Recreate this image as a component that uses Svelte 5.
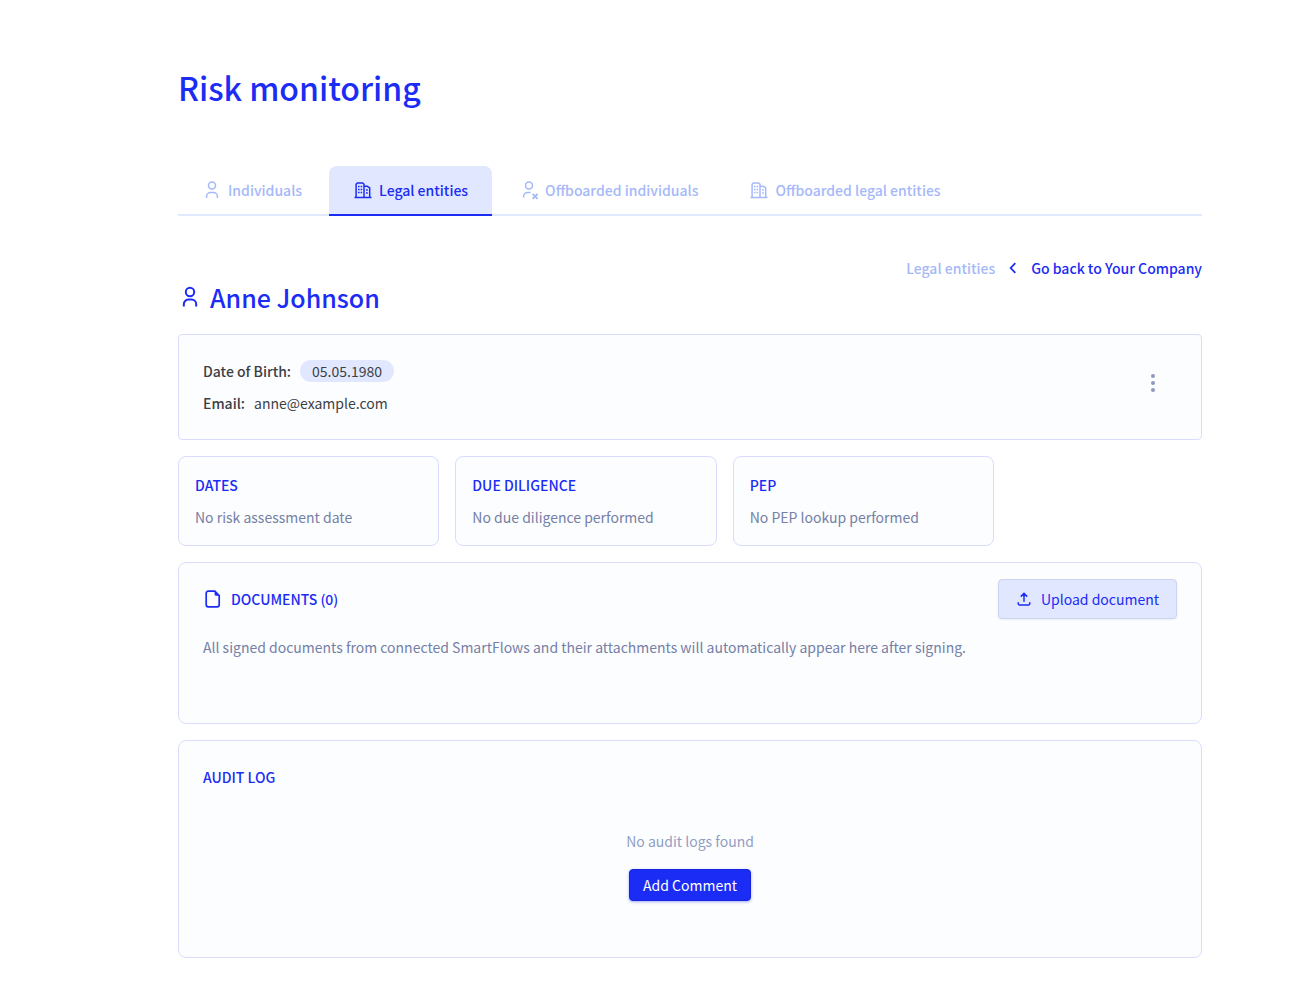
<script lang="ts">
	type Tab = { label: string; icon: 'person' | 'building' | 'person-x' };

	const tabs: Tab[] = [
		{ label: 'Individuals', icon: 'person' },
		{ label: 'Legal entities', icon: 'building' },
		{ label: 'Offboarded individuals', icon: 'person-x' },
		{ label: 'Offboarded legal entities', icon: 'building' }
	];
	let activeTab = $state('Legal entities');

	const checks = [
		{ title: 'DATES', text: 'No risk assessment date' },
		{ title: 'DUE DILIGENCE', text: 'No due diligence performed' },
		{ title: 'PEP', text: 'No PEP lookup performed' }
	];
</script>

{#snippet icon(name: string)}
	<svg class="icon" viewBox="0 0 20 20" aria-hidden="true">
		{#if name === 'person'}
			<circle cx="10" cy="5.6" r="3.5" />
			<path d="M4.6 18v-1.5a4 4 0 0 1 4-4h2.8a4 4 0 0 1 4 4v1.5" />
		{:else if name === 'person-x'}
			<circle cx="10" cy="5.6" r="3.5" />
			<path d="M4.6 17.6v-1.1a4 4 0 0 1 4-4h3" />
			<path class="cross" d="M13.6 13.8l5 5M18.6 13.8l-5 5" />
		{:else}
			<path d="M1.5 17.4h17M3.1 17.4V4.2l1.2-1.2h5.5L11 4.2v13.2M11 6.3h3.3l2.4 1.6v9.5" />
			<path d="M5 6.6h1.6M7.6 6.6h1.6M5 9.6h1.6M7.6 9.6h1.6M5 12.6h1.6M7.6 12.6h1.6M13 10.1h1.8M13 13.1h1.8" />
		{/if}
	</svg>
{/snippet}

<div class="page">
	<main>
		<h1>Risk monitoring</h1>

		<nav class="tabs">
			{#each tabs as tab}
				<button class="tab" class:active={tab.label === activeTab} onclick={() => (activeTab = tab.label)}>
					{@render icon(tab.icon)}
					{tab.label}
				</button>
			{/each}
		</nav>

		<div class="breadcrumb">
			<a class="muted" href="#entities">Legal entities</a>
			<svg class="chevron" viewBox="0 0 12 12" aria-hidden="true">
				<path d="M8.3 1.2L3.7 6l4.6 4.8" />
			</svg>
			<a href="#company">Go back to Your Company</a>
		</div>

		<h2 class="name">
			<svg class="icon large" viewBox="0 0 24 24" aria-hidden="true">
				<circle cx="12" cy="7" r="4.2" />
				<path d="M5.8 21.5v-2.3a4.6 4.6 0 0 1 4.6-4.6h3.2a4.6 4.6 0 0 1 4.6 4.6v2.3" />
			</svg>
			Anne Johnson
		</h2>

		<section class="card person">
			<dl>
				<div>
					<dt>Date of Birth:</dt>
					<dd class="pill">05.05.1980</dd>
				</div>
				<div>
					<dt>Email:</dt>
					<dd>anne@example.com</dd>
				</div>
			</dl>
			<button class="more" aria-label="More actions">
				<svg viewBox="0 0 24 24" aria-hidden="true">
					<circle cx="12" cy="5" r="2" />
					<circle cx="12" cy="12" r="2" />
					<circle cx="12" cy="19" r="2" />
				</svg>
			</button>
		</section>

		<div class="checks">
			{#each checks as check}
				<section class="card check">
					<h3>{check.title}</h3>
					<p>{check.text}</p>
				</section>
			{/each}
		</div>

		<section class="card documents">
			<header>
				<h3>
					<svg class="icon" viewBox="0 0 20 20" aria-hidden="true">
						<path d="M5.2 2.2h6.6l4.4 4.4v9.2a2 2 0 0 1-2 2h-9a2 2 0 0 1-2-2V4.2a2 2 0 0 1 2-2z" />
						<path class="fold" d="M11.6 2.2v3a1.6 1.6 0 0 0 1.6 1.6h3z" />
					</svg>
					DOCUMENTS (0)
				</h3>
				<button class="upload">
					<svg class="icon small" viewBox="0 0 16 16" aria-hidden="true">
						<path d="M8 10.8V2.6M4.8 5.6L8 2.4l3.2 3.2M2.2 11.2v1.4a1.4 1.4 0 0 0 1.4 1.4h8.8a1.4 1.4 0 0 0 1.4-1.4v-1.4" />
					</svg>
					Upload document
				</button>
			</header>
			<p>All signed documents from connected SmartFlows and their attachments will automatically appear here after signing.</p>
		</section>

		<section class="card audit">
			<h3>AUDIT LOG</h3>
			<div class="empty">
				<p>No audit logs found</p>
				<button class="add">Add Comment</button>
			</div>
		</section>
	</main>
</div>

<style>
	:global(body) {
		margin: 0;
		background: #fff;
	}

	.page {
		padding: 64px 0 33px 77px;
		font-family: 'Source Sans Pro', 'Noto Sans CJK SC', sans-serif;
		font-size: 14px;
		line-height: 24px;
		color: #3d3f45;
	}

	main {
		max-width: 1024px;
		margin: 0 auto;
	}

	h1, h2, h3, p, dl, dd {
		margin: 0;
	}

	h1, h2, h3, a {
		color: #1b2cf5;
		font-weight: 500;
	}

	h1 {
		font-size: 32px;
		line-height: 46px;
	}

	h3 {
		font-size: 14px;
		line-height: 24px;
	}

	p {
		color: #7480a6;
	}

	button {
		font: inherit;
		cursor: pointer;
	}

	.icon {
		width: 20px;
		height: 20px;
		flex: none;
		fill: none;
		stroke: currentColor;
		stroke-width: 1.5;
	}

	.icon.large {
		width: 24px;
		height: 24px;
		stroke-width: 2;
	}

	.icon.small {
		width: 16px;
		height: 16px;
	}

	.cross {
		stroke-width: 1.8;
	}

	.tabs {
		display: flex;
		gap: 3px;
		margin-top: 56px;
		box-shadow: inset 0 -2px #e0e9fd;
	}

	.tab {
		display: flex;
		align-items: center;
		gap: 6px;
		height: 50px;
		padding: 0 24px;
		border: 0;
		border-bottom: 2px solid transparent;
		background: none;
		color: #a5b8fa;
		font-weight: 500;
		white-space: nowrap;
	}

	.tab.active {
		border-bottom-color: #1b2cf5;
		border-radius: 8px 8px 0 0;
		background: #e1e7fe;
		color: #1b2cf5;
	}

	.breadcrumb {
		display: flex;
		align-items: center;
		justify-content: flex-end;
		gap: 12px;
		margin-top: 40px;
	}

	.breadcrumb a {
		text-decoration: none;
	}

	.breadcrumb .muted {
		color: #a5b8fa;
	}

	.chevron {
		width: 12px;
		height: 12px;
		fill: none;
		stroke: #1b2cf5;
		stroke-width: 1.8;
	}

	.name {
		display: flex;
		align-items: center;
		gap: 8px;
		margin-bottom: 20px;
		font-size: 25px;
		line-height: 34px;
	}

	.card {
		box-sizing: border-box;
		border: 1px solid #d9dcfd;
		border-radius: 8px;
		background: #fcfdff;
	}

	.person {
		display: flex;
		align-items: flex-start;
		justify-content: space-between;
		padding: 24px 36px 24px 24px;
		border-radius: 4px;
	}

	.person dl {
		display: grid;
		gap: 8px;
	}

	.person dl div {
		display: flex;
		align-items: center;
		gap: 9px;
	}

	dt {
		font-weight: 500;
	}

	.pill {
		padding: 0 12px;
		border-radius: 12px;
		background: #e1e7fe;
		line-height: 22px;
	}

	.more {
		display: flex;
		margin-top: 12px;
		padding: 0;
		border: 0;
		background: none;
	}

	.more svg {
		width: 24px;
		height: 24px;
		fill: #8e99bd;
	}

	.checks {
		display: grid;
		grid-template-columns: repeat(3, 1fr) 192px;
		gap: 16px;
		margin: 16px 0;
	}

	.check {
		display: grid;
		gap: 8px;
		padding: 16px;
	}

	.documents {
		min-height: 162px;
		padding: 16px 24px;
	}

	.documents header {
		display: flex;
		align-items: center;
		justify-content: space-between;
		margin-bottom: 16px;
	}

	.documents h3 {
		display: flex;
		align-items: center;
		gap: 8px;
	}

	.documents h3 .icon {
		stroke-width: 1.7;
	}

	.fold {
		fill: currentColor;
		stroke: none;
	}

	.upload {
		display: flex;
		align-items: center;
		gap: 9px;
		height: 40px;
		padding: 0 17px;
		border: 1px solid #cdd4ee;
		border-radius: 4px;
		background: #e1e7fe;
		box-shadow: 0 1px 2px rgba(30, 50, 150, 0.08);
		color: #1b2cf5;
	}

	.audit {
		margin-top: 16px;
		padding: 24px 24px 56px;
	}

	.empty {
		display: flex;
		flex-direction: column;
		align-items: center;
		gap: 16px;
		padding-top: 40px;
	}

	.empty p {
		color: #929dc3;
	}

	.add {
		height: 32px;
		padding: 0 13px;
		border: 1px solid #1824dd;
		border-radius: 4px;
		background: #1b2cf5;
		box-shadow: 0 1px 3px rgba(27, 44, 245, 0.4);
		color: #fff;
	}
</style>
